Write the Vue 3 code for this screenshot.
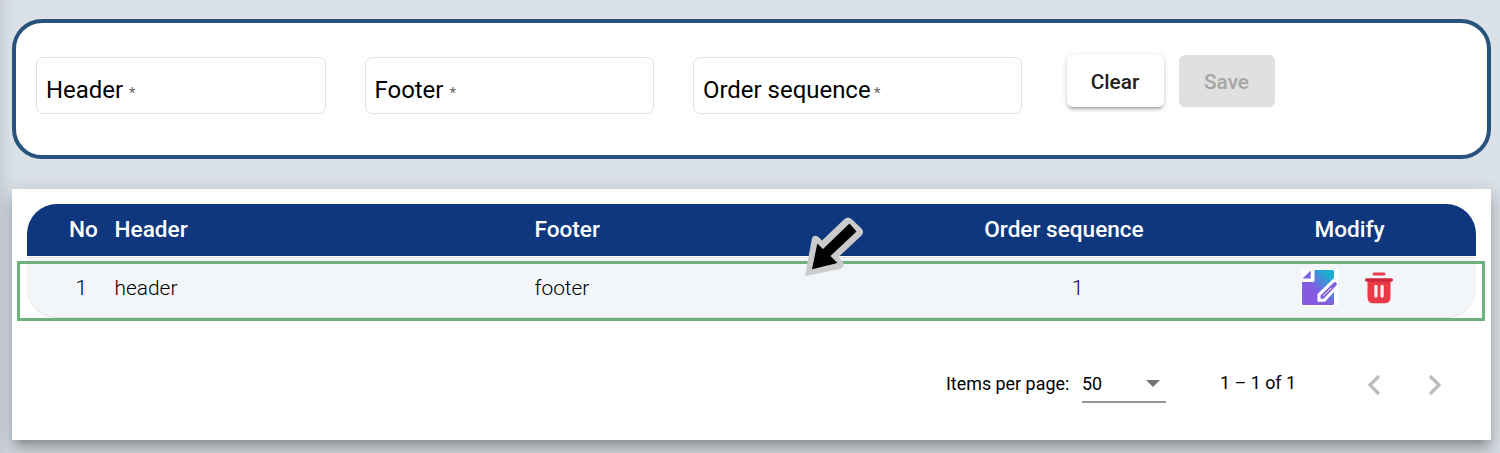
<script setup>
const fields = [
  { label: 'Header', kind: 'short' },
  { label: 'Footer', kind: 'short mid' },
  { label: 'Order sequence', kind: 'long' },
]
const rows = [{ no: 1, header: 'header', footer: 'footer', order: 1 }]
</script>

<template>
  <main class="page">
    <section class="form">
      <label v-for="f in fields" :key="f.label" class="field" :class="f.kind">
        <span class="name">{{ f.label }}</span><span class="star">*</span>
      </label>
      <button class="btn clear">Clear</button>
      <button class="btn save" disabled>Save</button>
    </section>

    <section class="card">
      <div class="table">
        <div class="tr head">
          <span class="no">No</span><span>Header</span><span>Footer</span>
          <span class="center">Order sequence</span><span class="mod">Modify</span>
        </div>
        <div v-for="r in rows" :key="r.no" class="tr row">
          <span class="no">{{ r.no }}</span><span>{{ r.header }}</span><span>{{ r.footer }}</span>
          <span class="center num">{{ r.order }}</span>
          <span class="actions">
            <svg class="edit" width="37" height="37" viewBox="0 0 37 37">
              <defs>
                <linearGradient id="g" x1="12" y1="23" x2="31" y2="4" gradientUnits="userSpaceOnUse">
                  <stop offset="0.1" stop-color="#855be4" />
                  <stop offset="0.85" stop-color="#1badd0" />
                </linearGradient>
              </defs>
              <rect width="37" height="37" fill="#fff" />
              <path d="M13.5 1H31.5Q33 1 33 2.500V34.500Q33 36 31.500 36H2.500Q1 36 1 34.500V13H12Q13.500 13 13.500 11.500Z" fill="url(#g)" />
              <path d="M1.500 9.500L9.700 1.500V9.500Z" fill="#7b64e0" />
              <path d="M16.500 25L33 9H37V18.500L24 32.700H16.500Z" fill="#fff" />
              <path d="M19.500 29.700V26.500L32.800 13.400Q34 12.600 35.200 13.700Q36.500 15 35.500 16.200L22.600 29.700Z" fill="#7b63df" />
              <path d="M22 27.200L30.500 18.700" stroke="#fff" stroke-width="1" />
            </svg>
            <svg class="trash" width="28" height="32" viewBox="0 0 28 32">
              <rect x="7.500" y="0.500" width="13" height="3" rx="1.500" fill="#e93b4b" />
              <path d="M2.500 8H25.500V25Q25.500 31.300 19.500 31.300H8.500Q2.500 31.300 2.500 25Z" fill="#e93947" />
              <rect x="0" y="6.300" width="28" height="3.400" rx="1.700" fill="#cc283d" />
              <rect x="9.300" y="12.700" width="3.200" height="13" rx="1.600" fill="#fff0f1" />
              <rect x="15.500" y="12.700" width="3.200" height="13" rx="1.600" fill="#fff0f1" />
            </svg>
          </span>
        </div>
      </div>
      <div class="marker"></div>
      <svg class="pointer" width="60" height="60" viewBox="0 0 60 60">
        <path d="M0 59L7 21Q9 17 13.500 20L17 23.500L39.500 2Q43 -1 46.500 2L56.500 11.500Q59.500 15 56.500 18.500L33.500 40L38 45Q40 50 35 52Z" fill="#cbcbcb" />
        <path d="M7 52.200L12.300 26.500L18 32L44.500 6.500L51.500 14.500L25.500 39L32.500 46Z" fill="#000" />
      </svg>
      <div class="pager">
        <span class="label">Items per page:</span>
        <span class="select">50<i class="caret"></i></span>
        <span class="range">1 – 1 of 1</span>
        <svg class="chev prev" width="14" height="22" viewBox="0 0 14 22"><path d="M12 2L3 11L12 20" /></svg>
        <svg class="chev" width="14" height="22" viewBox="0 0 14 22"><path d="M2 2L11 11L2 20" /></svg>
      </div>
    </section>
  </main>
</template>

<style>
body { margin: 0; overflow: hidden; }
</style>
<style scoped>
* { box-sizing: border-box; }
.page {
  height: 453px; padding: 19px 9px 0 12px; overflow: hidden;
  background: #dae1e7; font-family: Roboto, sans-serif; color: #000;
  box-shadow: inset 12px 0 14px -10px #bfc4d0;
}
.form {
  height: 140px; border: 4px solid #28537d; border-radius: 30px; background: #fff;
  padding: 32px 20px 0; display: flex; align-items: flex-start;
}
.field {
  height: 57px; margin-top: 2px; border: 1px solid #e0e0e0; border-radius: 7px;
  padding: 17px 0 0 9px; display: flex; line-height: 30px; white-space: nowrap;
}
.short { width: 290px; margin-right: 39px; }
.mid { width: 289px; padding-left: 8.500px; }
.long { width: 329px; margin-right: 45px; }
.name { font-size: 23.950px; }
.star { font-size: 15px; color: #666; margin-left: 6px; padding-top: 3px; }
.long .star { margin-left: 3.500px; }
.btn {
  height: 52px; border: 0; border-radius: 6px; padding: 2px 1px 0 0; font: 500 20.800px/50px Roboto, sans-serif;
}
.clear {
  width: 97px; margin-right: 15px; background: #fff; color: #202122;
  box-shadow: 0 4px 2px -3px rgba(0,0,0,.2), 0 3px 3px rgba(0,0,0,.14), 0 1px 7px rgba(0,0,0,.12);
}
.save { width: 96px; background: #e0e0e0; color: #a6a6a6; }
.card {
  position: relative; height: 251px; margin-top: 30px; padding: 15px 15px 0; background: #fff;
  box-shadow: 0 7px 8px -4px rgba(0,0,0,.2), 0 12px 15px 1px rgba(0,0,0,.14), 0 5px 20px 3px rgba(0,0,0,.12);
}
.tr { display: grid; grid-template-columns: 87.5px 420px 384px 290px 1fr; align-items: center; }
.head {
  height: 52px; border-radius: 30px 30px 0 0; background: #0f377e; color: #fff;
  font-size: 22.600px; font-weight: 500; padding-bottom: 1px;
}
.row {
  height: 61px; margin-top: 1px; border-top: 1px solid #e0e0e0; border-bottom: 1px solid #dddfe2;
  border-radius: 0 0 30px 30px; background: #f2f6f9; font-size: 20.900px; font-weight: 300;
  padding-top: 1px;
}
.no { padding-left: 42px; }
.row .no { padding-left: 48.500px; }
.center { text-align: center; padding-left: 1px; }
.row .num { color: #000052; padding-left: 28px; }
.mod { padding-left: 106px; }
.actions { display: flex; align-items: center; padding-left: 92px; margin-top: -2px; }
.trash { margin: 2px 0 0 27.500px; }
.marker { position: absolute; left: 5px; top: 72px; width: 1468px; height: 60px; border: 3px solid #6eb17c; }
.pointer { position: absolute; left: 793px; top: 28px; }
.pager { display: flex; height: 60px; margin-top: 36px; padding-left: 919px; align-items: flex-start; font-size: 17.900px; line-height: 24px; }
.label { width: 136px; padding-top: 18px; white-space: nowrap; }
.select { width: 84px; height: 49px; padding-top: 18px; border-bottom: 2px solid #949494; display: flex; justify-content: space-between; }
.caret { border: 7.500px solid transparent; border-top-color: #757575; border-bottom: 0; margin: 8px 6px 0 0; height: 0; }
.range { margin-left: 54px; width: 146.500px; padding-top: 17px; white-space: nowrap; }
.chev { margin-top: 20px; fill: none; stroke: #bdbdbd; stroke-width: 3.300; flex: none; }
.prev { margin-right: 47px; }
</style>
